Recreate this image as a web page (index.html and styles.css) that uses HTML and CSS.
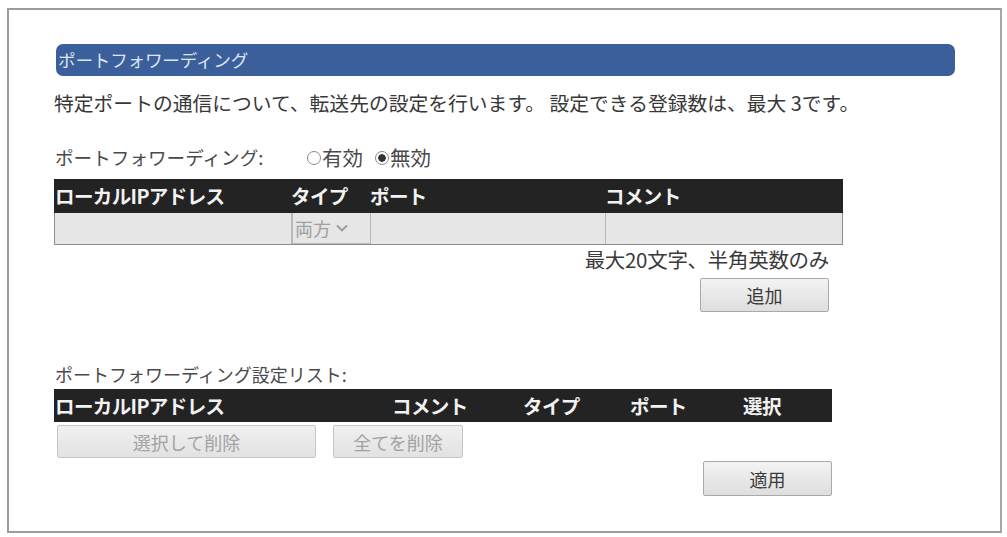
FILE: index.html
```html
<!DOCTYPE html>
<html lang="ja">
<head>
<meta charset="utf-8">
<title>ポートフォワーディング</title>
<link rel="stylesheet" href="styles.css">
</head>
<body>
<div class="frame">
  <div class="content">
    <div class="titlebar">ポートフォワーディング</div>
    <p class="desc">特定ポートの通信について、転送先の設定を行います。 設定できる登録数は、最大 3です。</p>

    <div class="radio-row">
      <span class="radio-label">ポートフォワーディング:</span>
      <span class="radios">
        <span class="radio"><span class="dot"></span>有効</span>
        <span class="radio checked"><span class="dot"></span>無効</span>
      </span>
    </div>

    <div class="table1">
      <div class="thead grid1">
        <span>ローカルIPアドレス</span>
        <span>タイプ</span>
        <span>ポート</span>
        <span>コメント</span>
      </div>
      <div class="trow grid1">
        <span class="cell"></span>
        <span class="cell select">両方<svg class="chev" viewBox="0 0 12 8" width="12" height="8"><path d="M1 1.5 L6 6.5 L11 1.5" fill="none" stroke="#9a9a9a" stroke-width="1.8"/></svg></span>
        <span class="cell"></span>
        <span class="cell last"></span>
      </div>
    </div>
    <div class="note-row table1w">
      <span class="note">最大20文字、半角英数のみ</span>
    </div>
    <div class="btn-row table1w">
      <button class="btn add">追加</button>
    </div>

    <div class="list-label">ポートフォワーディング設定リスト:</div>
    <div class="thead grid2">
      <span>ローカルIPアドレス</span>
      <span>コメント</span>
      <span>タイプ</span>
      <span>ポート</span>
      <span>選択</span>
    </div>
    <div class="del-row">
      <button class="btn disabled del-sel">選択して削除</button>
      <button class="btn disabled del-all">全てを削除</button>
    </div>
    <div class="btn-row table2w">
      <button class="btn apply">適用</button>
    </div>
  </div>
</div>
</body>
</html>
```

FILE: styles.css
```css
html, body {
  margin: 0;
  padding: 0;
  background: #ffffff;
}

body {
  font-family: "Noto Sans CJK JP", "Noto Sans", "Liberation Sans", sans-serif;
  color: #3c3c3c;
}

.frame {
  margin: 8px 0 0 7px;
  width: 995px;
  height: 525px;
  box-sizing: border-box;
  border: 2px solid #9c9c9c;
  border-right-color: #a8a8a8;
}

.content {
  padding: 34px 0 0 45px;
}

.titlebar {
  margin-left: 2px;
  width: 899px;
  height: 32px;
  box-sizing: border-box;
  padding-left: 2px;
  background: #3b5f9b;
  border-radius: 7px;
  color: #dde5f1;
  font-size: 17.6px;
  line-height: 32px;
  letter-spacing: -0.2px;
}

.desc {
  margin: 15px 0 0 0;
  font-size: 19.8px;
  line-height: 24px;
  white-space: nowrap;
  color: #383838;
}

.radio-row {
  margin-top: 30px;
  display: flex;
  align-items: center;
  height: 24px;
  line-height: 24px;
  color: #4a4a4a;
}

.radio-label {
  margin-left: 1px;
  width: 252px;
  font-size: 18.6px;
}

.radios {
  display: flex;
  gap: 12px;
  font-size: 20.5px;
}

.radio {
  display: inline-flex;
  align-items: center;
}

.dot {
  display: inline-block;
  width: 14px;
  height: 14px;
  box-sizing: border-box;
  border: 1px solid #8a8a8a;
  border-radius: 50%;
  margin-right: 1px;
  position: relative;
  top: 1px;
}

.radio.checked .dot {
  background: radial-gradient(circle, #333 0 3.5px, #fff 4px);
}

.table1 {
  margin-top: 10px;
  width: 789px;
}

.table1w {
  width: 775px;
}

.table2w {
  width: 778px;
}

.thead {
  background: #232323;
  color: #f2f2f2;
  font-size: 19.5px;
  font-weight: 700;
  height: 34px;
  line-height: 34px;
  letter-spacing: -0.6px;
}

.grid1 {
  display: grid;
  grid-template-columns: 237px 79px 235px 1fr;
}

.thead span:first-child {
  padding-left: 1px;
}

.trow {
  height: 32px;
  background: #e6e6e6;
  box-sizing: border-box;
  border: 1px solid #8c8c8c;
  border-top: none;
}

.cell {
  border-right: 1px solid #b8b8b8;
}

.cell.last {
  border-right: none;
}

.select {
  display: flex;
  align-items: center;
  padding-left: 2px;
  gap: 4px;
  font-size: 18px;
  color: #a0a0a0;
  border-left: 1px solid #b8b8b8;
  border-bottom: 1px solid #b8b8b8;
}

.chev {
  margin-left: 1px;
}

.note-row {
  display: flex;
  justify-content: flex-end;
  margin-top: 1px;
  height: 26px;
  line-height: 26px;
}

.note {
  font-size: 20.5px;
  letter-spacing: -0.3px;
  color: #3a3a3a;
}

.btn-row {
  display: flex;
  justify-content: flex-end;
}

.btn {
  font-family: inherit;
  font-size: 18px;
  color: #3a3a3a;
  background: linear-gradient(#f3f3f3, #dedede);
  border: 1px solid #a9a9a9;
  border-radius: 2px;
  padding: 0;
  height: 34px;
  line-height: 32px;
}

.add {
  margin-top: 6px;
  width: 129px;
}

.list-label {
  margin-top: 50px;
  margin-left: 1px;
  font-size: 18px;
  line-height: 24px;
  color: #4a4a4a;
}

.grid2 {
  margin-top: 3px;
  width: 778px;
  height: 33px;
  line-height: 33px;
  display: grid;
  grid-template-columns: 338px 131px 107px 113px 1fr;
}

.del-row {
  display: flex;
  margin-top: 3px;
  gap: 17px;
  padding-left: 3px;
}

.btn.disabled {
  color: #a2a2a2;
  background: linear-gradient(#f0f0f0, #e2e2e2);
  border-color: #c6c6c6;
  height: 33px;
}

.del-sel {
  width: 259px;
}

.del-all {
  width: 130px;
}

.apply {
  margin-top: 3px;
  width: 129px;
  height: 35px;
}
```
